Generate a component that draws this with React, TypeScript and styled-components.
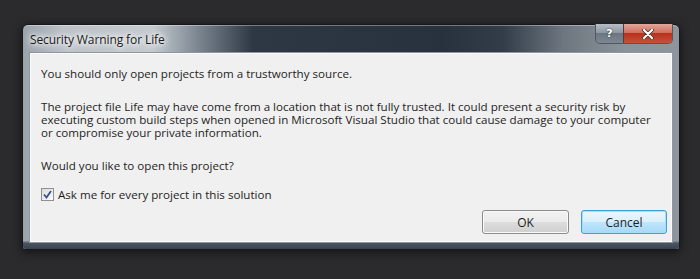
import React from 'react';
import styled, { createGlobalStyle } from 'styled-components';

const GlobalStyle = createGlobalStyle`
  html, body {
    margin: 0;
    padding: 0;
    background: #2b2b2d;
  }
  body {
    font-family: 'Open Sans', 'Noto Sans', 'Liberation Sans', sans-serif;
  }
`;

const Page = styled.div`
  width: 700px;
  height: 279px;
  padding: 24px 0 0 22px;
  box-sizing: border-box;
  background: #2b2b2d;
`;

const Window = styled.div`
  position: relative;
  width: 658px;
  height: 226px;
  box-sizing: border-box;
  border: 1px solid #15181c;
  border-radius: 6px 6px 3px 3px;
  padding: 0 6px 6px 6px;
  display: flex;
  flex-direction: column;
  background:
    linear-gradient(90deg,
      #9aa2aa 0px,
      #bcc2c8 40px,
      #c4cacf 130px,
      #7c8690 175px,
      #2e3845 230px,
      #28323e 420px,
      #323d49 480px,
      #6d767f 540px,
      #8a9198 600px,
      #8e959c 658px);
  box-shadow: 0 2px 10px rgba(0, 0, 0, 0.6), inset 0 1px 0 rgba(255, 255, 255, 0.35);
  &::after {
    content: '';
    position: absolute;
    left: 0;
    right: 0;
    bottom: 0;
    height: 8px;
    border-radius: 0 0 3px 3px;
    background: linear-gradient(180deg, #8c96a0 0, #4a5561 2px, #38434f 100%);
    pointer-events: none;
  }
`;

const TitleBar = styled.div`
  height: 27px;
  display: flex;
  align-items: flex-start;
`;

const Title = styled.div`
  margin: 6px 0 0 1px;
  font-size: 12px;
  color: #1a1a1a;
  text-shadow: 0 0 8px #fff, 0 0 8px #fff, 0 0 4px #fff;
  letter-spacing: -0.1px;
`;

const Controls = styled.div`
  margin-left: auto;
  display: flex;
  height: 19px;
  margin-top: -1px;
  border: 1px solid #4f5861;
  border-top: none;
  border-radius: 0 0 5px 5px;
  overflow: hidden;
`;

const CtrlButton = styled.div<{ $close?: boolean }>`
  width: ${({ $close }) => ($close ? '48px' : '27px')};
  height: 100%;
  display: flex;
  align-items: center;
  justify-content: center;
  color: #fff;
  font-family: 'DejaVu Sans', sans-serif;
  font-weight: bold;
  font-size: 11px;
  text-shadow: 0 0 2px rgba(0, 0, 0, 0.8);
  border-left: ${({ $close }) => ($close ? '1px solid #5a3a36' : 'none')};
  background: ${({ $close }) =>
    $close
      ? 'linear-gradient(180deg, #e2a69a 0%, #d2705f 45%, #b8321e 50%, #c8503a 100%)'
      : 'linear-gradient(180deg, #b7bec6 0%, #8e98a2 45%, #6c7782 50%, #7c8791 100%)'};
`;

const Content = styled.div`
  position: relative;
  z-index: 1;
  flex: 1;
  background: #f0f0f0;
  border: 1px solid #8e969e;
  box-shadow: inset 0 0 0 1px #fbfbfb;
  display: flex;
  flex-direction: column;
  padding: 14px 5px 8px 11px;
  color: #1e1e1e;
  font-size: 11.6px;
  line-height: 13px;
`;

const Para = styled.p<{ $gap?: number }>`
  margin: 0 0 ${({ $gap }) => $gap ?? 20}px 0;
  white-space: nowrap;
`;

const CheckRow = styled.label`
  display: flex;
  align-items: center;
  gap: 4px;
`;

const Box = styled.span`
  width: 11px;
  height: 11px;
  border: 1px solid #8f8f8f;
  background: linear-gradient(135deg, #dcdcdc, #fbfbfb);
  display: flex;
  align-items: center;
  justify-content: center;
`;

const Footer = styled.div`
  margin-top: auto;
  display: flex;
  justify-content: flex-end;
  gap: 12px;
`;

const Button = styled.button<{ $focused?: boolean }>`
  width: ${({ $focused }) => ($focused ? '86px' : '87px')};
  height: 24px;
  font-family: inherit;
  font-size: 12px;
  color: #1e1e1e;
  border-radius: 3px;
  border: 1px solid ${({ $focused }) => ($focused ? '#3c9fd6' : '#8c8c8c')};
  box-shadow: inset 0 0 0 1px ${({ $focused }) => ($focused ? '#a6e0f7' : '#fafafa')};
  background: ${({ $focused }) =>
    $focused
      ? 'linear-gradient(180deg, #eaf6fd 0%, #d9f0fc 50%, #bee6fd 51%, #a7d9f5 100%)'
      : 'linear-gradient(180deg, #f2f2f2 0%, #ebebeb 50%, #dddddd 51%, #cfcfcf 100%)'};
  padding: 0;
`;

export default function App() {
  return (
    <>
      <GlobalStyle />
      <Page>
        <Window>
          <TitleBar>
            <Title>Security Warning for Life</Title>
            <Controls>
              <CtrlButton>?</CtrlButton>
              <CtrlButton $close>
                <svg width="12" height="10" viewBox="0 0 12 10">
                  <path
                    d="M2 1 L10 9 M10 1 L2 9"
                    stroke="#3b2a28"
                    strokeWidth="3.6"
                    strokeLinecap="round"
                  />
                  <path
                    d="M2 1 L10 9 M10 1 L2 9"
                    stroke="#ffffff"
                    strokeWidth="2.2"
                    strokeLinecap="round"
                  />
                </svg>
              </CtrlButton>
            </Controls>
          </TitleBar>
          <Content>
            <Para>You should only open projects from a trustworthy source.</Para>
            <Para>
              The project file Life may have come from a location that is not fully trusted. It could present a security risk by
              <br />
              executing custom build steps when opened in Microsoft Visual Studio that could cause damage to your computer
              <br />
              or compromise your private information.
            </Para>
            <Para $gap={16}>Would you like to open this project?</Para>
            <CheckRow>
              <Box>
                <svg width="9" height="9" viewBox="0 0 9 9">
                  <path d="M1 4.5 L3.5 7.5 L8 1" fill="none" stroke="#3b4f8f" strokeWidth="1.8" />
                </svg>
              </Box>
              Ask me for every project in this solution
            </CheckRow>
            <Footer>
              <Button>OK</Button>
              <Button $focused>Cancel</Button>
            </Footer>
          </Content>
        </Window>
      </Page>
    </>
  );
}
